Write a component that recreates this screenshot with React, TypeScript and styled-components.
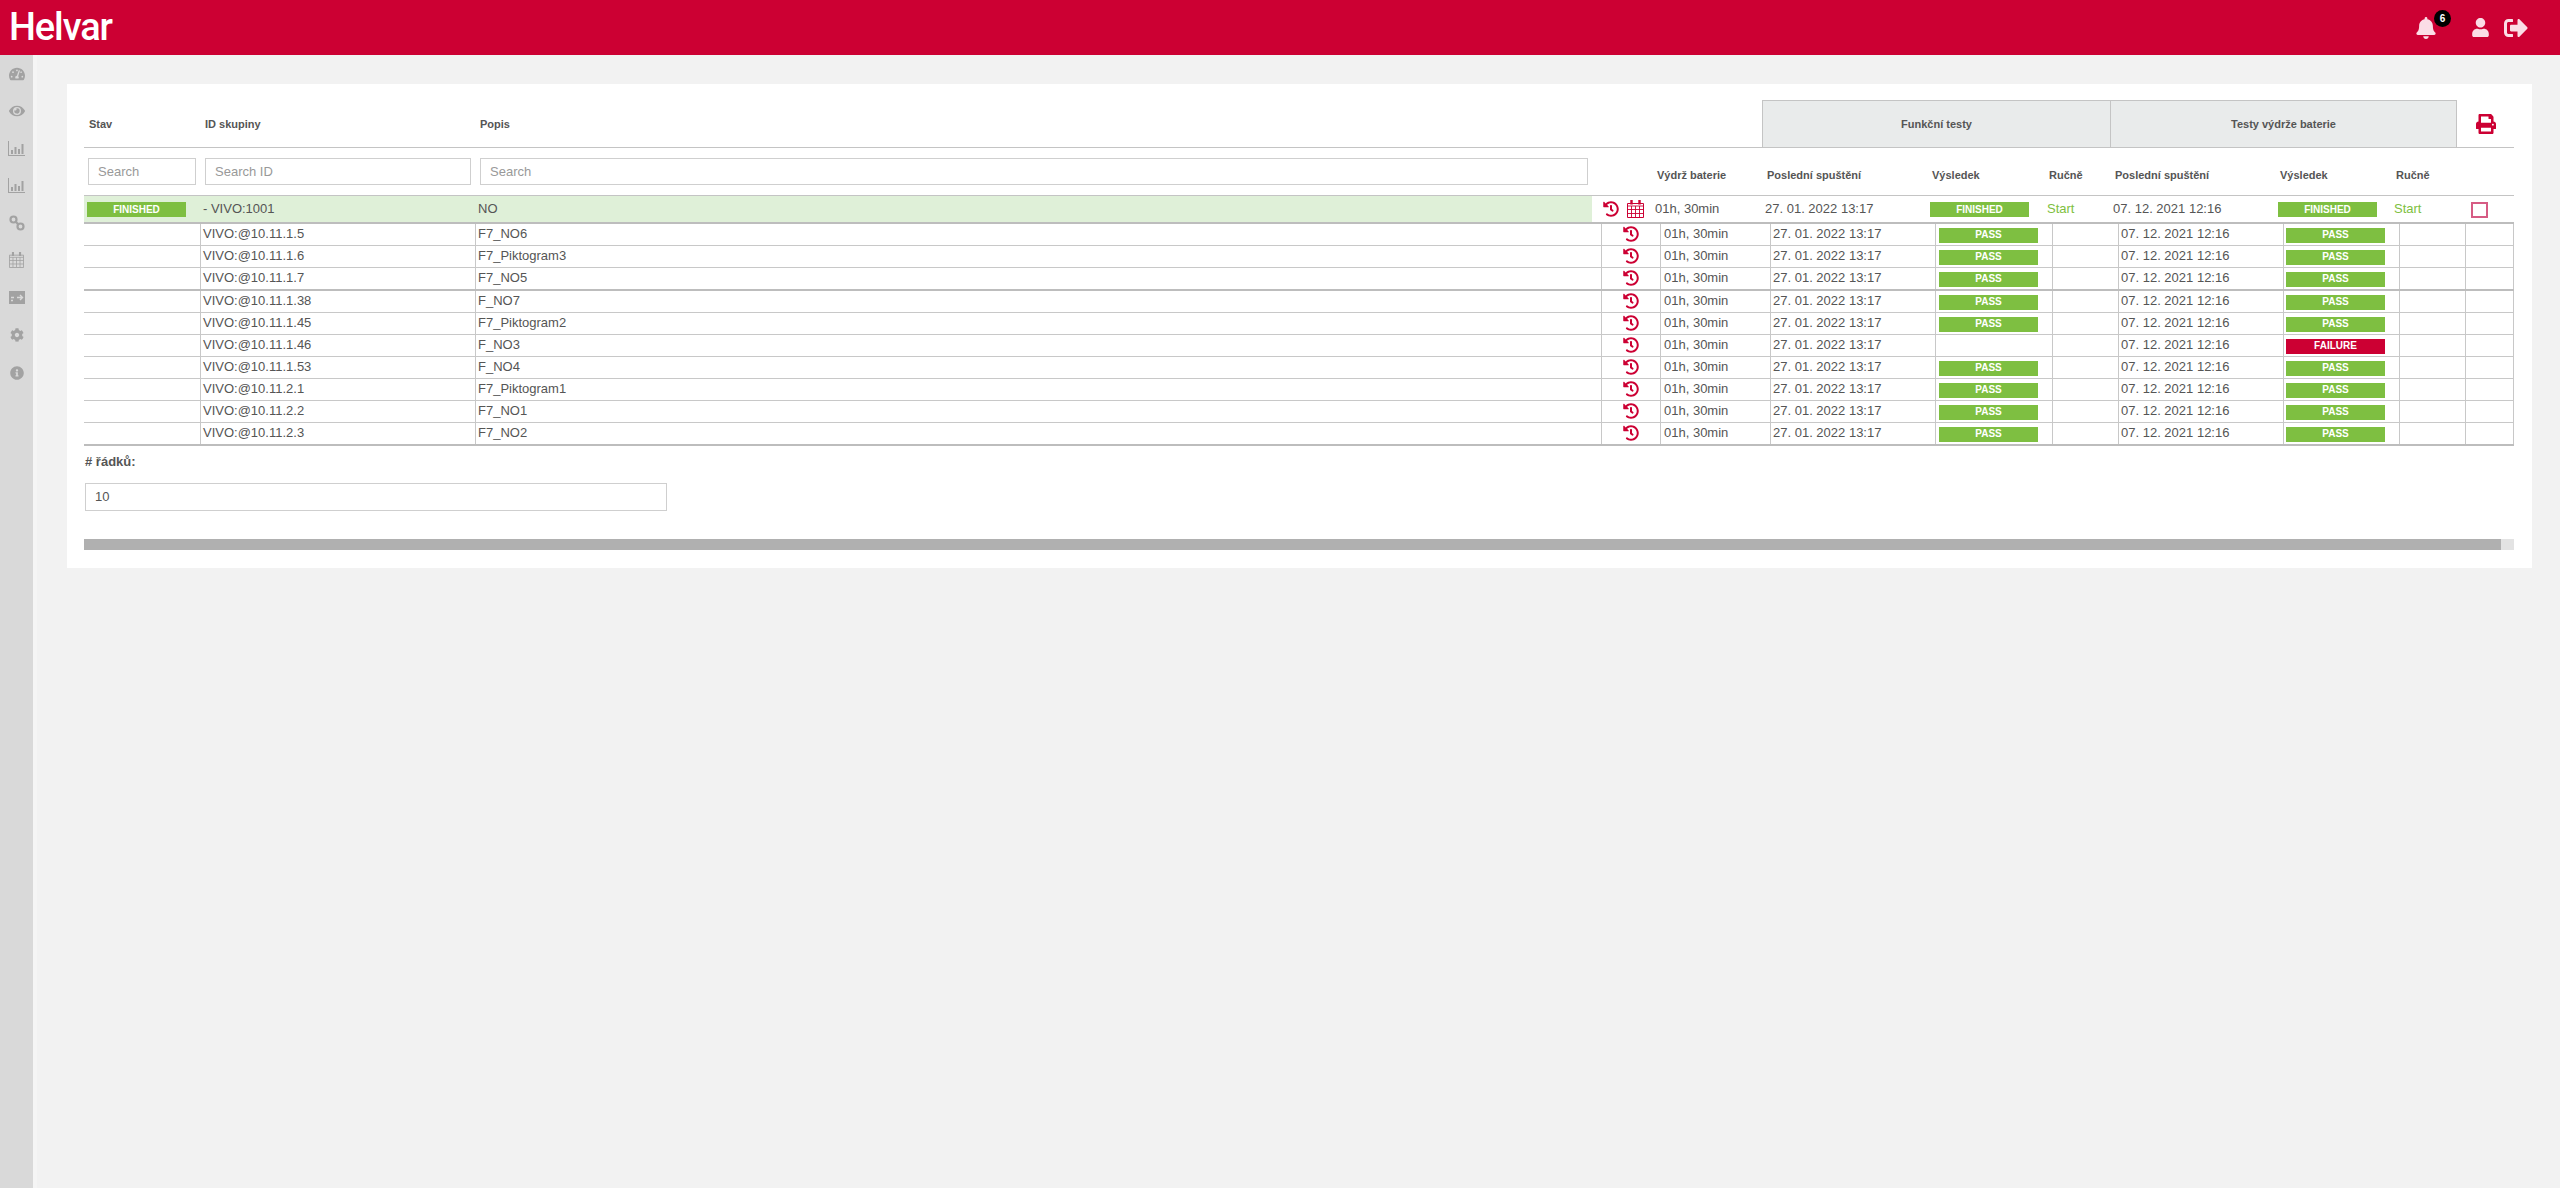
import React from "react";
import styled, { createGlobalStyle } from "styled-components";
import {
  FaBell,
  FaCog,
  FaEye,
  FaHistory,
  FaInfoCircle,
  FaPrint,
  FaSignOutAlt,
  FaTachometerAlt,
  FaUser,
} from "react-icons/fa";

const GROUP_COLUMNS = "116px 275px 1117px 60px 110px 165px 117px 66px 165px 116px 67px 56px";
const CHILD_COLUMNS = "116px 275px 1126px 59px 110px 165px 117px 66px 165px 116px 66px 49px";

const GlobalStyle = createGlobalStyle`
  html, body {
    margin: 0;
    padding: 0;
    background: #f2f2f2;
    font-family: "Liberation Sans", Arial, sans-serif;
    color: #555;
  }
`;

const Page = styled.div`
  display: flex;
  flex-direction: column;
  height: 1188px;
  overflow: hidden;
`;

const TopBar = styled.header`
  display: flex;
  align-items: center;
  flex: 0 0 55px;
  background: #cc0033;
  padding: 0 32px 0 9px;
`;

const Logo = styled.div`
  font-family: Roboto, "Liberation Sans", sans-serif;
  font-size: 38px;
  font-weight: 500;
  letter-spacing: -1.1px;
  line-height: 55px;
  color: #fff;
`;

const TopActions = styled.div`
  display: flex;
  align-items: center;
  margin-left: auto;
  color: #fbdde6;
`;

const BellWrap = styled.div`
  position: relative;
  display: flex;
  font-size: 22px;
  margin-right: 34px;
`;

const Badge = styled.span`
  position: absolute;
  top: -7px;
  left: 19px;
  width: 17px;
  height: 17px;
  border-radius: 50%;
  background: #000;
  color: #fff;
  font-size: 10px;
  font-weight: 700;
  line-height: 17px;
  text-align: center;
`;

const TopIcon = styled.span<{ $size: number; $gap?: number }>`
  display: flex;
  font-size: ${(p) => p.$size}px;
  margin-right: ${(p) => p.$gap ?? 0}px;
`;

const Body = styled.div`
  display: flex;
  flex: 1;
  min-height: 0;
`;

const Sidebar = styled.nav`
  display: flex;
  flex-direction: column;
  align-items: center;
  gap: 22.4px;
  flex: 0 0 33px;
  padding-top: 11px;
  background: #d9d9d9;
  border-right: 4px solid #f5f5f5;
  color: #a2a2a2;
  font-size: 15px;
`;

const SideItem = styled.span`
  display: flex;
  align-items: center;
  justify-content: center;
  width: 17px;
  height: 15px;
`;

const Main = styled.main`
  flex: 1;
  padding: 29px 28px 0 30px;
`;

const Card = styled.section`
  background: #fff;
  height: 484px;
  box-sizing: border-box;
  padding: 16px 18px 0 17px;
`;

const HeadRow = styled.div`
  display: grid;
  grid-template-columns: 116px 275px 1287px 348px 347px 57px;
  height: 48px;
  box-sizing: border-box;
  border-bottom: 1px solid #c4c4c4;
`;

const HeadLabel = styled.div`
  display: flex;
  align-items: center;
  padding-left: 5px;
  font-size: 11px;
  font-weight: 700;
`;

const Tab = styled.div<{ $last?: boolean }>`
  display: flex;
  align-items: center;
  justify-content: center;
  background: #e9ebeb;
  border: 1px solid #c4c4c4;
  border-bottom: 0;
  border-right-width: ${(p) => (p.$last ? 1 : 0)}px;
  font-size: 11px;
  font-weight: 700;
`;

const PrintCell = styled.div`
  display: flex;
  align-items: center;
  justify-content: center;
  color: #cc0033;
  font-size: 20px;
`;

const FilterRow = styled.div`
  display: grid;
  grid-template-columns: ${GROUP_COLUMNS};
  align-items: center;
  height: 48px;
  box-sizing: border-box;
  border-bottom: 1px solid #c4c4c4;
`;

const SearchBox = styled.input<{ $left?: number }>`
  box-sizing: border-box;
  width: calc(100% - ${(p) => (p.$left ?? 5) + 4}px);
  height: 27px;
  margin: 0 0 0 ${(p) => p.$left ?? 5}px;
  padding: 0 9px;
  border: 1px solid #cfcfcf;
  border-radius: 0;
  outline: none;
  font-family: inherit;
  font-size: 13px;
  color: #555;
  &::placeholder {
    color: #999;
    opacity: 1;
  }
`;

const ColumnTitle = styled.div`
  padding: 7px 0 0 5px;
  font-size: 11px;
  font-weight: 700;
  white-space: nowrap;
`;

const GroupRow = styled.div`
  display: grid;
  grid-template-columns: ${GROUP_COLUMNS};
  align-items: center;
  height: 28px;
  box-sizing: border-box;
  border-bottom: 2px solid #bdbdbd;
  font-size: 13px;
`;

const GroupCell = styled.div<{ $tint?: boolean }>`
  display: flex;
  align-items: center;
  height: 100%;
  padding-left: 3px;
  padding-bottom: 1px;
  box-sizing: border-box;
  background: ${(p) => (p.$tint ? "#dff0d8" : "transparent")};
  white-space: nowrap;
`;

const GroupIcons = styled(GroupCell)`
  gap: 8px;
  padding-left: 11px;
  color: #cc0033;
  font-size: 16px;
`;

const StatusPill = styled.span<{ $failed?: boolean }>`
  display: block;
  width: 99px;
  height: 15px;
  margin-top: 2px;
  background: ${(p) => (p.$failed ? "#cc0033" : "#7ebf41")};
  color: #fff;
  font-size: 10px;
  font-weight: 700;
  line-height: 15px;
  text-align: center;
`;

const RowPill = styled(StatusPill)`
  margin-top: 4px;
  line-height: 13px;
`;

const StartLink = styled.span`
  color: #7ebf41;
  font-size: 13px;
`;

const Check = styled.input`
  appearance: none;
  box-sizing: border-box;
  width: 17px;
  height: 16px;
  margin: 2px 0 0 10px;
  border: 2px solid #d65c84;
  border-radius: 0;
  background: #fff;
`;

const ChildRow = styled.div<{ $thick?: boolean }>`
  display: grid;
  grid-template-columns: ${CHILD_COLUMNS};
  height: ${(p) => (p.$thick ? 23 : 22)}px;
  box-sizing: border-box;
  border-bottom: ${(p) => (p.$thick ? 2 : 1)}px solid ${(p) => (p.$thick ? "#bdbdbd" : "#c8c8c8")};
  font-size: 13px;
`;

const ChildCell = styled.div<{ $pad?: number; $first?: boolean; $center?: boolean }>`
  display: flex;
  align-items: center;
  justify-content: ${(p) => (p.$center ? "center" : "flex-start")};
  box-sizing: border-box;
  padding: 0 0 2px ${(p) => p.$pad ?? 2}px;
  border-left: ${(p) => (p.$first ? "0" : "1px solid #c8c8c8")};
  white-space: nowrap;
`;

const LastCell = styled(ChildCell)`
  border-right: 1px solid #c8c8c8;
`;

const ReplayIcon = styled(FaHistory)`
  color: #cc0033;
  font-size: 16px;
`;

const RowsBlock = styled.div`
  padding-top: 8px;
`;

const RowsLabel = styled.div`
  margin-left: 1px;
  font-size: 13px;
  font-weight: 700;
  line-height: 15px;
`;

const RowsInput = styled.div`
  box-sizing: border-box;
  width: 582px;
  height: 28px;
  margin: 14px 0 0 1px;
  padding-left: 9px;
  border: 1px solid #cfcfcf;
  font-size: 13px;
  line-height: 25px;
`;

const ScrollTrack = styled.div`
  height: 11px;
  margin-top: 28px;
  background: #e3e3e3;
`;

const ScrollThumb = styled.div`
  width: 2417px;
  height: 100%;
  background: #b0b0b0;
`;

const BarsIcon = () => (
  <svg width="17" height="15" viewBox="0 0 17 15" fill="currentColor">
    <path d="M0 0h1v14h16v1H0z" />
    <path d="M3 9h2v4H3zM6.5 6h2v7h-2zM10 8h2v5h-2zM13.500 3h2v10h-2z" />
  </svg>
);

const LinksIcon = () => (
  <svg width="16" height="16" viewBox="0 0 16 16" fill="none" stroke="currentColor" strokeWidth="2.200">
    <circle cx="4.500" cy="4.500" r="3" />
    <circle cx="11.500" cy="11.500" r="3" />
    <path d="M6.500 6.500l3 3" />
  </svg>
);

const CalendarIcon = ({ size = 17 }: { size?: number }) => (
  <svg width={size} height={size + 1} viewBox="0 0 17 18" fill="none" stroke="currentColor">
    <path d="M.5 3.500h16v14H.5z" />
    <path d="M.5 6h16M.5 9.500h16M.5 13.500h16M4.500 6v11M8.500 6v11M12.500 6v11" strokeWidth=".9" />
    <path d="M4.500 0v4.500M12.500 0v4.500" strokeWidth="2.400" />
  </svg>
);

const TransferIcon = () => (
  <svg width="16" height="13" viewBox="0 0 16 13">
    <path d="M0 0h16v13H0z" fill="currentColor" />
    <path d="M2 6.500h3M8 6.500h5M11 4l2.500 2.500L11 9M2 9.500h2" fill="none" stroke="#d9d9d9" strokeWidth="1.400" />
  </svg>
);

interface TestRow {
  id: string;
  name: string;
  thick?: boolean;
  noFunctional?: boolean;
  batteryFailed?: boolean;
}

const rows: TestRow[] = [
  { id: "VIVO:@10.11.1.5", name: "F7_NO6" },
  { id: "VIVO:@10.11.1.6", name: "F7_Piktogram3" },
  { id: "VIVO:@10.11.1.7", name: "F7_NO5", thick: true },
  { id: "VIVO:@10.11.1.38", name: "F_NO7" },
  { id: "VIVO:@10.11.1.45", name: "F7_Piktogram2" },
  { id: "VIVO:@10.11.1.46", name: "F_NO3", noFunctional: true, batteryFailed: true },
  { id: "VIVO:@10.11.1.53", name: "F_NO4" },
  { id: "VIVO:@10.11.2.1", name: "F7_Piktogram1" },
  { id: "VIVO:@10.11.2.2", name: "F7_NO1" },
  { id: "VIVO:@10.11.2.3", name: "F7_NO2", thick: true },
];

const sideIcons = [
  <FaTachometerAlt key="dash" size={16} />,
  <FaEye key="eye" size={16} />,
  <BarsIcon key="bars1" />,
  <BarsIcon key="bars2" />,
  <LinksIcon key="links" />,
  <CalendarIcon key="cal" size={15} />,
  <TransferIcon key="transfer" />,
  <FaCog key="cog" size={14} />,
  <FaInfoCircle key="info" size={14} />,
];

const App = () => (
  <Page>
    <GlobalStyle />
    <TopBar>
      <Logo>Helvar</Logo>
      <TopActions>
        <BellWrap>
          <FaBell />
          <Badge>6</Badge>
        </BellWrap>
        <TopIcon $size={19} $gap={14}>
          <FaUser />
        </TopIcon>
        <TopIcon $size={24}>
          <FaSignOutAlt />
        </TopIcon>
      </TopActions>
    </TopBar>
    <Body>
      <Sidebar>
        {sideIcons.map((icon) => (
          <SideItem key={icon.key}>{icon}</SideItem>
        ))}
      </Sidebar>
      <Main>
        <Card>
          <HeadRow>
            <HeadLabel>Stav</HeadLabel>
            <HeadLabel>ID skupiny</HeadLabel>
            <HeadLabel>Popis</HeadLabel>
            <Tab>Funkční testy</Tab>
            <Tab $last>Testy výdrže baterie</Tab>
            <PrintCell>
              <FaPrint />
            </PrintCell>
          </HeadRow>
          <FilterRow>
            <SearchBox $left={4} placeholder="Search" />
            <SearchBox placeholder="Search ID" />
            <SearchBox placeholder="Search" />
            <div />
            <ColumnTitle>Výdrž baterie</ColumnTitle>
            <ColumnTitle>Poslední spuštění</ColumnTitle>
            <ColumnTitle>Výsledek</ColumnTitle>
            <ColumnTitle>Ručně</ColumnTitle>
            <ColumnTitle>Poslední spuštění</ColumnTitle>
            <ColumnTitle>Výsledek</ColumnTitle>
            <ColumnTitle>Ručně</ColumnTitle>
          </FilterRow>
          <GroupRow>
            <GroupCell $tint>
              <StatusPill>FINISHED</StatusPill>
            </GroupCell>
            <GroupCell $tint>- VIVO:1001</GroupCell>
            <GroupCell $tint>NO</GroupCell>
            <GroupIcons>
              <FaHistory />
              <CalendarIcon />
            </GroupIcons>
            <GroupCell>01h, 30min</GroupCell>
            <GroupCell>27. 01. 2022 13:17</GroupCell>
            <GroupCell>
              <StatusPill>FINISHED</StatusPill>
            </GroupCell>
            <GroupCell>
              <StartLink>Start</StartLink>
            </GroupCell>
            <GroupCell>07. 12. 2021 12:16</GroupCell>
            <GroupCell>
              <StatusPill>FINISHED</StatusPill>
            </GroupCell>
            <GroupCell>
              <StartLink>Start</StartLink>
            </GroupCell>
            <GroupCell>
              <Check type="checkbox" />
            </GroupCell>
          </GroupRow>
          {rows.map((row) => (
            <ChildRow key={row.id} $thick={row.thick}>
              <ChildCell $first />
              <ChildCell>{row.id}</ChildCell>
              <ChildCell>{row.name}</ChildCell>
              <ChildCell $pad={0} $center>
                <ReplayIcon />
              </ChildCell>
              <ChildCell $pad={3}>01h, 30min</ChildCell>
              <ChildCell>27. 01. 2022 13:17</ChildCell>
              <ChildCell $pad={3}>{!row.noFunctional && <RowPill>PASS</RowPill>}</ChildCell>
              <ChildCell />
              <ChildCell>07. 12. 2021 12:16</ChildCell>
              <ChildCell>
                {row.batteryFailed ? <RowPill $failed>FAILURE</RowPill> : <RowPill>PASS</RowPill>}
              </ChildCell>
              <ChildCell />
              <LastCell />
            </ChildRow>
          ))}
          <RowsBlock>
            <RowsLabel># řádků:</RowsLabel>
            <RowsInput>10</RowsInput>
          </RowsBlock>
          <ScrollTrack>
            <ScrollThumb />
          </ScrollTrack>
        </Card>
      </Main>
    </Body>
  </Page>
);

export default App;
